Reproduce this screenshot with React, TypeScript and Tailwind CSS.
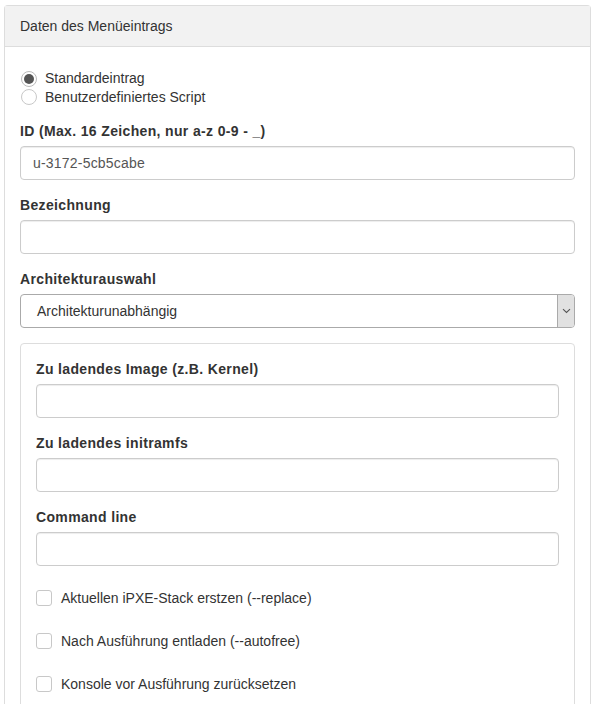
import React from 'react';

const FONT = "font-['Liberation_Sans',Arial,sans-serif]";

function Field({ label, value }: { label: string; value?: string }) {
  return (
    <div className="flex flex-col">
      <label className="text-[14px] font-bold tracking-[0.35px] text-[#333] leading-[20px] mb-[5px]">{label}</label>
      <input
        type="text"
        defaultValue={value}
        className="h-[34px] w-full rounded-[4px] border border-[#ccc] bg-white px-[12px] text-[14px] tracking-[0.2px] text-[#555] shadow-[inset_0_1px_1px_rgba(0,0,0,0.075)] outline-none"
      />
    </div>
  );
}

function Check({ label }: { label: string }) {
  return (
    <label className="flex items-center gap-[9px] h-[20px] text-[14px] text-[#333]">
      <span className="w-[16px] h-[16px] rounded-[3px] border border-[#c8c8c8] bg-white shrink-0" />
      {label}
    </label>
  );
}

export default function App() {
  return (
    <div className={`${FONT} bg-white min-h-[704px] pl-[4px] pr-[8px] pt-[5px]`}>
      <div className="border border-[#ddd] rounded-t-[4px] border-b-0">
        <div className="h-[41px] bg-[#f2f2f2] border-b border-[#ddd] px-[15px] flex items-center text-[14px] text-[#333]">
          Daten des Menüeintrags
        </div>
        <div className="px-[15px] pt-[22px] pb-[20px] flex flex-col">
          <div className="flex flex-col">
            <label className="flex items-center gap-[8px] h-[19px] text-[14px] text-[#333]">
              <span className="w-[16px] h-[16px] ml-[1px] rounded-full border border-[#bbb] bg-white flex items-center justify-center shrink-0">
                <span className="w-[10px] h-[10px] rounded-full bg-[#555]" />
              </span>
              Standardeintrag
            </label>
            <label className="flex items-center gap-[8px] h-[18px] text-[14px] text-[#333]">
              <span className="w-[16px] h-[16px] ml-[1px] rounded-full border border-[#c8c8c8] bg-white shrink-0" />
              Benutzerdefiniertes Script
            </label>
          </div>
          <div className="flex flex-col gap-[15px] mt-[15px]">
            <Field label="ID (Max. 16 Zeichen, nur a-z 0-9 - _)" value="u-3172-5cb5cabe" />
            <Field label="Bezeichnung" />
            <div className="flex flex-col">
              <label className="text-[14px] font-bold tracking-[0.35px] text-[#333] leading-[20px] mb-[5px]">Architekturauswahl</label>
              <div className="h-[34px] w-full rounded-[4px] border border-[#aaa] bg-white flex items-stretch">
                <span className="flex-1 flex items-center pl-[16px] text-[14px] text-[#333]">Architekturunabhängig</span>
                <span className="w-[17px] bg-[#e1e1e1] border-l border-[#aaa] rounded-r-[3px] flex items-center justify-center">
                  <svg width="9" height="6" viewBox="0 0 9 6" fill="none">
                    <path d="M1 1.2 L4.5 4.5 L8 1.2" stroke="#555" strokeWidth="1.1" />
                  </svg>
                </span>
              </div>
            </div>
            <div className="border border-[#ddd] rounded-[4px] px-[15px] pt-[15px] pb-[20px] flex flex-col">
              <div className="flex flex-col gap-[15px]">
                <Field label="Zu ladendes Image (z.B. Kernel)" />
                <Field label="Zu ladendes initramfs" />
                <Field label="Command line" />
              </div>
              <div className="flex flex-col gap-[23px] mt-[22px]">
                <Check label="Aktuellen iPXE-Stack erstzen (--replace)" />
                <Check label="Nach Ausführung entladen (--autofree)" />
                <Check label="Konsole vor Ausführung zurücksetzen" />
              </div>
            </div>
          </div>
        </div>
      </div>
    </div>
  );
}
